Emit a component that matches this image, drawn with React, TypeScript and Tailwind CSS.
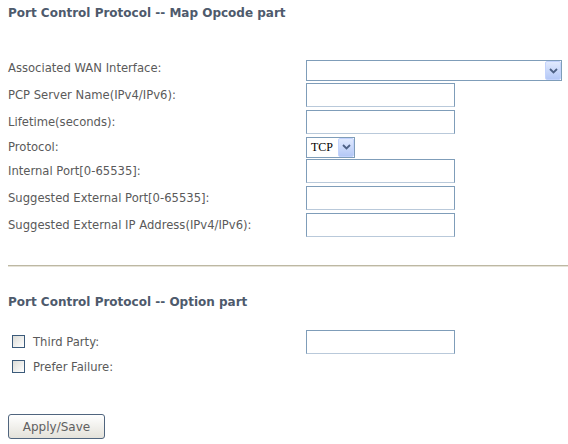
const rows = [
  { label: "PCP Server Name(IPv4/IPv6):", kind: "input" },
  { label: "Lifetime(seconds):", kind: "input" },
  { label: "Protocol:", kind: "proto" },
  { label: "Internal Port[0-65535]:", kind: "input" },
  { label: "Suggested External Port[0-65535]:", kind: "input" },
  { label: "Suggested External IP Address(IPv4/IPv6):", kind: "input" },
];

function Arrow() {
  return (
    <div className="flex h-[19px] w-[16px] items-center justify-center rounded-[2px] border border-[#c3d3fd] bg-gradient-to-b from-[#e1eafe] to-[#b4c8f6]">
      <svg width="9" height="6" viewBox="0 0 9 6">
        <path d="M1 1 L4.5 4.5 L8 1" fill="none" stroke="#4d6185" strokeWidth="1.8" />
      </svg>
    </div>
  );
}

function TextBox() {
  return <div className="h-[24px] w-[149px] border border-[#7f9db9] border-b-[#b9c9da] bg-white" />;
}

function CheckBox() {
  return <div className="h-[13px] w-[13px] border border-[#3b5a7a] bg-gradient-to-br from-[#dcdcd7] to-white" />;
}

export default function App() {
  return (
    <div className="min-h-[444px] w-[568px] bg-white pl-[8px] text-[11.6px] text-[#5a5a5a] [font-family:'DejaVu_Sans',sans-serif]">
      <div className="pt-[6px] text-[12px] font-bold leading-[14px] text-[#4e5a6c]">
        Port Control Protocol -- Map Opcode part
      </div>

      <div className="mt-[38px]">
        <div className="flex h-[24px] items-start pt-[2px]">
          <div className="w-[298px] pt-[1px] leading-[14px]">Associated WAN Interface:</div>
          <div className="flex h-[21px] w-[256px] items-center justify-end border border-[#7f9db9] bg-white">
            <Arrow />
          </div>
        </div>
        {rows.map((r) =>
          r.kind === "proto" ? (
            <div key={r.label} className="flex h-[22px] items-center">
              <div className="w-[298px] leading-[14px]">{r.label}</div>
              <div className="flex h-[21px] w-[49px] items-center justify-between border border-[#7f9db9] bg-white pl-[4px] text-[12px] text-black [font-family:'Liberation_Serif',serif]">
                <span>TCP</span>
                <Arrow />
              </div>
            </div>
          ) : (
            <div key={r.label} className="flex h-[27px] items-start pt-[1px]">
              <div className="flex h-[24px] w-[298px] items-center leading-[14px]">{r.label}</div>
              <TextBox />
            </div>
          )
        )}
      </div>

      <div className="mt-[26px] h-[2px] border-t border-t-[#bdb8a3] border-b border-b-[#e6e3d8]" />

      <div className="mt-[28px] text-[12px] font-bold leading-[14px] text-[#4e5a6c]">
        Port Control Protocol -- Option part
      </div>

      <div className="mt-[20px]">
        <div className="flex h-[25px] items-center">
          <div className="flex w-[298px] items-center gap-[8px] pl-[4px]">
            <CheckBox />
            <span className="leading-[14px]">Third Party:</span>
          </div>
          <TextBox />
        </div>
        <div className="flex h-[25px] items-center">
          <div className="flex w-[298px] items-center gap-[8px] pl-[4px]">
            <CheckBox />
            <span className="leading-[14px]">Prefer Failure:</span>
          </div>
        </div>
      </div>

      <div className="mt-[35px]">
        <div className="flex h-[25px] w-[97px] items-center justify-center rounded-[3px] border border-[#50657e] bg-gradient-to-b from-white to-[#e4e2da] text-[12px] text-[#606060]">
          Apply/Save
        </div>
      </div>
    </div>
  );
}
